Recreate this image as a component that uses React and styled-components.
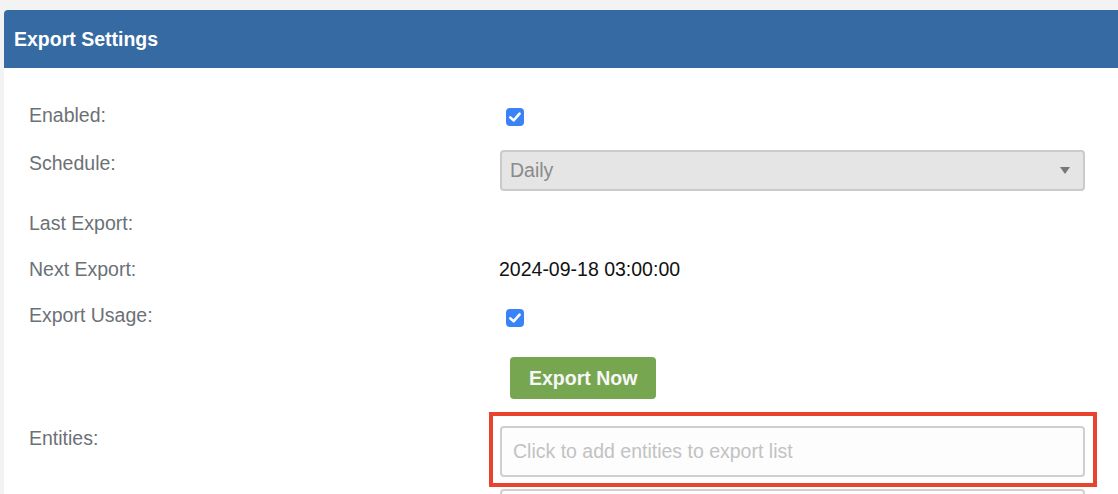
import React from "react";
import styled, { createGlobalStyle } from "styled-components";

const GlobalStyle = createGlobalStyle`
  html, body {
    margin: 0;
    padding: 0;
    background: #f3f3f3;
    overflow: hidden;
  }
  body {
    font-family: "Liberation Sans", Arial, Helvetica, sans-serif;
  }
`;

const Page = styled.div`
  padding: 10px 0 0 4px;
  height: 484px;
  overflow: hidden;
`;

const Panel = styled.div`
  width: 1130px;
  background: #fff;
  border-top-left-radius: 4px;
  overflow: hidden;
`;

const Header = styled.div`
  height: 58px;
  background: #366aa3;
  display: flex;
  align-items: center;
  padding-left: 10px;
`;

const Title = styled.h3`
  margin: 0;
  color: #fff;
  font-size: 19.5px;
  font-weight: bold;
`;

const Body = styled.div`
  padding: 32px 0 0 25px;
`;

const Row = styled.div`
  display: grid;
  grid-template-columns: 471px 585px;
  align-items: start;
  height: ${(p) => p.$h}px;
`;

const Label = styled.label`
  color: #6c7176;
  font-size: 19.5px;
  line-height: 30px;
  margin-top: ${(p) => p.$top || 0}px;
`;

const Value = styled.div`
  display: flex;
  align-items: flex-start;
`;

const Text = styled.span`
  color: #111;
  font-size: 19.5px;
  line-height: 30px;
  margin-left: -1px;
`;

const Check = styled.span`
  width: 18px;
  height: 18px;
  margin: ${(p) => p.$top}px 0 0 6px;
  border-radius: 4px;
  background: #3a82f7;
  display: flex;
  align-items: center;
  justify-content: center;
`;

const Select = styled.div`
  box-sizing: border-box;
  width: 585px;
  height: 41px;
  margin-top: 2px;
  background: #e5e5e5;
  border: 2px solid #cacaca;
  border-radius: 4px;
  display: flex;
  align-items: center;
  justify-content: space-between;
  padding: 0 13px 0 8px;
  color: #8a8a8a;
  font-size: 19.5px;
`;

const Arrow = styled.span`
  width: 0;
  height: 0;
  border-left: 5px solid transparent;
  border-right: 5px solid transparent;
  border-top: 7px solid #777;
`;

const Button = styled.button`
  height: 42px;
  margin-left: 10px;
  padding: 0 19px;
  border: none;
  border-radius: 4px;
  background: #77a651;
  color: #f7f7f7;
  font-family: inherit;
  font-size: 19.5px;
  font-weight: bold;
`;

const Highlight = styled.div`
  margin-left: -11px;
  width: 608px;
  box-sizing: border-box;
  border: 4px solid #e8432e;
  padding: 10px 8px 6px 7px;
`;

const Input = styled.div`
  box-sizing: border-box;
  width: 585px;
  height: 51px;
  border: 2px solid #cfcfcf;
  border-radius: 4px;
  background: #fdfdfd;
  display: flex;
  align-items: center;
  padding-left: 11px;
  color: #c2c2c2;
  font-size: 19.5px;
  margin-top: ${(p) => p.$top || 0}px;
`;

const Checkmark = () => (
  <svg width="14" height="14" viewBox="0 0 14 14">
    <path
      d="M2.3 7.4 L5.6 10.4 L11.6 3.6"
      fill="none"
      stroke="#fff"
      strokeWidth="2.6"
      strokeLinecap="round"
      strokeLinejoin="round"
    />
  </svg>
);

export default function App() {
  return (
    <Page>
      <GlobalStyle />
      <Panel>
        <Header>
          <Title>Export Settings</Title>
        </Header>
        <Body>
          <Row $h={48}>
            <Label>Enabled:</Label>
            <Value>
              <Check $top={8}>
                <Checkmark />
              </Check>
            </Value>
          </Row>
          <Row $h={60}>
            <Label>Schedule:</Label>
            <Value>
              <Select>
                Daily
                <Arrow />
              </Select>
            </Value>
          </Row>
          <Row $h={46}>
            <Label>Last Export:</Label>
            <Value />
          </Row>
          <Row $h={46}>
            <Label>Next Export:</Label>
            <Value>
              <Text>2024-09-18 03:00:00</Text>
            </Value>
          </Row>
          <Row $h={57}>
            <Label>Export Usage:</Label>
            <Value>
              <Check $top={9}>
                <Checkmark />
              </Check>
            </Value>
          </Row>
          <Row $h={55}>
            <span />
            <Value>
              <Button>Export Now</Button>
            </Value>
          </Row>
          <Row $h={120}>
            <Label $top={11}>Entities:</Label>
            <div>
              <Highlight>
                <Input>Click to add entities to export list</Input>
              </Highlight>
              <Input $top={2} />
            </div>
          </Row>
        </Body>
      </Panel>
    </Page>
  );
}
